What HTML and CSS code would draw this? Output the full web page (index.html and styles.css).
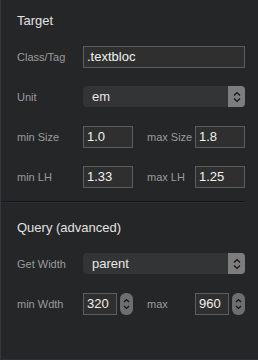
FILE: index.html
```html
<!DOCTYPE html>
<html>
<head>
<meta charset="utf-8">
<link rel="stylesheet" href="styles.css">
</head>
<body>
<div class="panel">
  <section class="group">
    <div class="title">Target</div>
    <div class="row">
      <span class="label">Class/Tag</span>
      <div class="input wide">.textbloc</div>
    </div>
    <div class="row">
      <span class="label">Unit</span>
      <div class="select"><span class="select-text">em</span><span class="select-btn"><svg width="8" height="12" viewBox="0 0 8 12"><path d="M1 4.5 L4 1.5 L7 4.5 M1 7.5 L4 10.5 L7 7.5" fill="none" stroke="#111" stroke-width="1.2"/></svg></span></div>
    </div>
    <div class="row pair">
      <span class="label">min Size</span>
      <div class="input small">1.0</div>
      <span class="label label2">max Size</span>
      <div class="input small">1.8</div>
    </div>
    <div class="row pair">
      <span class="label">min LH</span>
      <div class="input small">1.33</div>
      <span class="label label2">max LH</span>
      <div class="input small">1.25</div>
    </div>
  </section>
  <div class="separator"></div>
  <section class="group">
    <div class="title">Query (advanced)</div>
    <div class="row">
      <span class="label">Get Width</span>
      <div class="select"><span class="select-text">parent</span><span class="select-btn"><svg width="8" height="12" viewBox="0 0 8 12"><path d="M1 4.5 L4 1.5 L7 4.5 M1 7.5 L4 10.5 L7 7.5" fill="none" stroke="#111" stroke-width="1.2"/></svg></span></div>
    </div>
    <div class="row pair">
      <span class="label">min Wdth</span>
      <div class="num"><div class="input numbox">320</div><span class="stepper"><svg width="7" height="14" viewBox="0 0 7 14"><path d="M1 5 L3.5 2.5 L6 5 M1 9 L3.5 11.5 L6 9" fill="none" stroke="#111" stroke-width="1.1"/></svg></span></div>
      <span class="label label2">max</span>
      <div class="num"><div class="input numbox">960</div><span class="stepper"><svg width="7" height="14" viewBox="0 0 7 14"><path d="M1 5 L3.5 2.5 L6 5 M1 9 L3.5 11.5 L6 9" fill="none" stroke="#111" stroke-width="1.1"/></svg></span></div>
    </div>
  </section>
</div>
</body>
</html>
```
FILE: styles.css
```css
html, body {
  margin: 0;
  padding: 0;
  background: #252628;
}
body {
  width: 258px;
  height: 360px;
  overflow: hidden;
  font-family: "Liberation Sans", Arial, sans-serif;
}
.panel {
  box-sizing: border-box;
  height: 360px;
  border-left: 1px solid #36373a;
  border-bottom: 1px solid #303134;
  padding: 0 13px 0 16px;
}
.group {
  display: flex;
  flex-direction: column;
  gap: 18px;
}
.title {
  color: #e2e2e2;
  font-size: 13px;
  line-height: 16px;
  height: 16px;
  margin-top: 13px;
  margin-bottom: -1px;
}
.separator {
  height: 1px;
  background: #141516;
  margin: 13px 0 0 -16px;
  border-bottom: 1px solid #2c2d30;
}
.separator + .group .title {
  margin-top: 17px;
}
.row {
  display: flex;
  align-items: center;
  height: 22px;
}
.label {
  width: 66px;
  flex: none;
  color: #9b9b9b;
  font-size: 11px;
}
.label2 {
  width: 48px;
  margin-left: 14px;
}
.input {
  box-sizing: border-box;
  height: 22px;
  background: #2f2f30;
  border: 1px solid #5d5d5e;
  color: #f2f2f2;
  font-size: 13px;
  line-height: 20px;
  padding-left: 3px;
}
.wide {
  flex: 1;
}
.small {
  width: 50px;
  flex: none;
}
.select {
  flex: 1;
  height: 21px;
  display: flex;
  align-items: center;
  background: #333436;
  border-radius: 4px;
  overflow: hidden;
  align-self: flex-start;
  margin-top: 0;
}
.select-text {
  flex: 1;
  color: #e8e8e8;
  font-size: 13px;
  padding-left: 9px;
}
.select-btn {
  width: 17px;
  height: 100%;
  background: #7d7d7e;
  display: flex;
  align-items: center;
  justify-content: center;
}
.num {
  width: 50px;
  flex: none;
  display: flex;
  align-items: center;
  gap: 3px;
}
.numbox {
  width: 34px;
  flex: none;
}
.stepper {
  width: 13px;
  height: 22px;
  border-radius: 6px;
  background: #6e6e70;
  display: flex;
  align-items: center;
  justify-content: center;
}
```
